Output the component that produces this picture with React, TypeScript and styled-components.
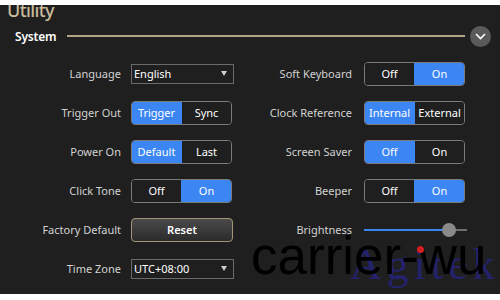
import React from "react";
import styled, { createGlobalStyle } from "styled-components";

const Global = createGlobalStyle`
  html, body { margin: 0; padding: 0; background: #ffffff; }
  body { font-family: "Noto Sans", "Open Sans", sans-serif; }
`;

const Page = styled.div`
  width: 500px;
  height: 300px;
  padding-top: 5px;
  box-sizing: border-box;
  background: #ffffff;
  position: relative;
  overflow: hidden;
`;

const Panel = styled.div`
  height: 289px;
  background: #1f1f1f;
  overflow: hidden;
  display: flex;
  flex-direction: column;
`;

const Title = styled.div`
  margin: -6px 0 0 7px;
  height: 22px;
  font-size: 18px;
  line-height: 22px;
  font-weight: 500;
  color: #c9bb9b;
  letter-spacing: -0.6px;
`;

const SectionHeader = styled.div`
  display: flex;
  align-items: center;
  height: 22px;
  margin-top: 4px;
  padding-left: 15px;
`;

const SectionName = styled.span`
  color: #ffffff;
  font-size: 12px;
  font-weight: 600;
  letter-spacing: -0.2px;
`;

const Rule = styled.div`
  flex: 1;
  height: 2px;
  background: #b3a688;
  margin: 0 5px 0 11px;
`;

const Collapse = styled.div`
  width: 21px;
  height: 21px;
  border-radius: 50%;
  background: #5a5a5a;
  margin-right: 9px;
  display: flex;
  align-items: center;
  justify-content: center;
`;

const Grid = styled.div`
  display: grid;
  grid-template-columns: 131px 102px 131px 101px;
  grid-auto-rows: 39px;
  align-items: center;
  margin-top: 7px;
`;

const Label = styled.div<{ $pad: number }>`
  text-align: right;
  padding-right: ${(p) => p.$pad}px;
  color: #d2d2d2;
  font-size: 11px;
  white-space: nowrap;
`;

const Select = styled.div`
  height: 20px;
  width: 103px;
  box-sizing: border-box;
  border: 1px solid #6a6a6a;
  display: flex;
  align-items: center;
  justify-content: space-between;
  padding: 0 6px 0 2px;
  color: #ffffff;
  font-size: 11px;
`;

const Arrow = styled.span`
  width: 0;
  height: 0;
  border-left: 3px solid transparent;
  border-right: 3px solid transparent;
  border-top: 5px solid #cfcfcf;
`;

const Seg = styled.div`
  height: 24px;
  width: 101px;
  box-sizing: border-box;
  border: 1px solid #7a7a7a;
  border-radius: 4px;
  display: flex;
  overflow: hidden;
`;

const SegItem = styled.div<{ $active: boolean }>`
  flex: 1;
  display: flex;
  align-items: center;
  justify-content: center;
  font-size: 11px;
  color: #ffffff;
  background: ${(p) => (p.$active ? "#3b86f3" : "#1f1f1f")};
  & + & {
    border-left: 1px solid ${(p) => (p.$active ? "#3b86f3" : "#555555")};
  }
`;

const ResetButton = styled.div`
  height: 24px;
  width: 102px;
  box-sizing: border-box;
  border: 1px solid #a39577;
  border-radius: 4px;
  background: linear-gradient(#4a4a4a, #2b2b2b);
  color: #ffffff;
  font-size: 11px;
  font-weight: 600;
  display: flex;
  align-items: center;
  justify-content: center;
`;

const Slider = styled.div`
  width: 103px;
  height: 14px;
  position: relative;
  display: flex;
  align-items: center;
`;

const Track = styled.div`
  height: 2px;
  flex: 1;
  background: #707070;
  position: relative;
`;

const Fill = styled.div`
  height: 2px;
  background: #3b86f3;
`;

const Thumb = styled.div`
  position: absolute;
  top: 0;
  width: 14px;
  height: 14px;
  border-radius: 50%;
  background: #8a8a8a;
`;

const Watermark = styled.div`
  position: absolute;
  left: 251px;
  top: 229px;
  font-family: "Liberation Sans", Arial, sans-serif;
  font-size: 53px;
  line-height: 54px;
  color: #000000;
  white-space: nowrap;
`;

const Brand = styled.div`
  position: absolute;
  left: 350px;
  top: 243px;
  font-family: "Liberation Serif", "Times New Roman", serif;
  font-size: 44px;
  line-height: 44px;
  letter-spacing: 5px;
  color: rgba(38, 36, 130, 0.8);
  white-space: nowrap;
`;

const RedDot = styled.div`
  position: absolute;
  left: 417px;
  top: 246px;
  width: 7px;
  height: 7px;
  border-radius: 50%;
  background: #d42020;
`;

const Segmented = ({ a, b, active }: { a: string; b: string; active: 0 | 1 }) => (
  <Seg>
    <SegItem $active={active === 0}>{a}</SegItem>
    <SegItem $active={active === 1}>{b}</SegItem>
  </Seg>
);

export default function App() {
  const brightness = 0.83;
  return (
    <>
      <Global />
      <Page>
        <Panel>
          <Title>Utility</Title>
          <SectionHeader>
            <SectionName>System</SectionName>
            <Rule />
            <Collapse>
              <svg width="11" height="7" viewBox="0 0 11 7">
                <path d="M1 1 L5.5 5.5 L10 1" stroke="#ffffff" strokeWidth="1.6" fill="none" />
              </svg>
            </Collapse>
          </SectionHeader>
          <Grid>
            <Label $pad={10}>Language</Label>
            <Select>
              <span>English</span>
              <Arrow />
            </Select>
            <Label $pad={12}>Soft Keyboard</Label>
            <Segmented a="Off" b="On" active={1} />

            <Label $pad={10}>Trigger Out</Label>
            <Segmented a="Trigger" b="Sync" active={0} />
            <Label $pad={12}>Clock Reference</Label>
            <Segmented a="Internal" b="External" active={0} />

            <Label $pad={10}>Power On</Label>
            <Segmented a="Default" b="Last" active={0} />
            <Label $pad={12}>Screen Saver</Label>
            <Segmented a="Off" b="On" active={0} />

            <Label $pad={10}>Click Tone</Label>
            <Segmented a="Off" b="On" active={1} />
            <Label $pad={12}>Beeper</Label>
            <Segmented a="Off" b="On" active={1} />

            <Label $pad={10}>Factory Default</Label>
            <ResetButton>Reset</ResetButton>
            <Label $pad={12}>Brightness</Label>
            <Slider>
              <Track>
                <Fill style={{ width: `${brightness * 100}%` }} />
              </Track>
              <Thumb style={{ left: `calc(${brightness * 100}% - 7px)` }} />
            </Slider>

            <Label $pad={10}>Time Zone</Label>
            <Select>
              <span>UTC+08:00</span>
              <Arrow />
            </Select>
          </Grid>
        </Panel>
        <Brand>Agitek</Brand>
        <Watermark>carrier-wu</Watermark>
        <RedDot />
      </Page>
    </>
  );
}
